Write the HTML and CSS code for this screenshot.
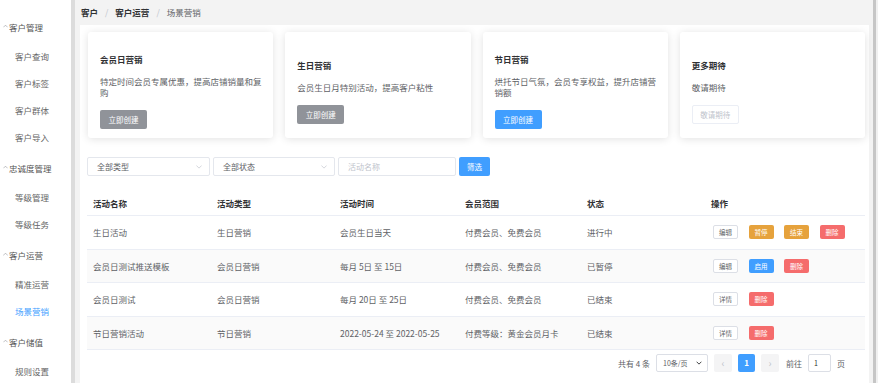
FILE: index.html
```html
<!DOCTYPE html>
<html lang="zh-CN">
  <head>
    <meta charset="UTF-8" />
    <meta name="viewport" content="width=device-width, initial-scale=1.0" />
    <title>场景营销</title>
    <link rel="stylesheet" href="styles.css">
  </head>
  <body>
    <div class="layout">
      <aside class="sidebar">
        <div class="group"><svg class="caret" viewBox="0 0 6 4"><polyline points="0.5,3.5 3,1 5.5,3.5" /></svg>客户管理</div>
        <div class="item">客户查询</div>
        <div class="item">客户标签</div>
        <div class="item">客户群体</div>
        <div class="item">客户导入</div>
        <div class="group"><svg class="caret" viewBox="0 0 6 4"><polyline points="0.5,3.5 3,1 5.5,3.5" /></svg>忠诚度管理</div>
        <div class="item">等级管理</div>
        <div class="item">等级任务</div>
        <div class="group"><svg class="caret" viewBox="0 0 6 4"><polyline points="0.5,3.5 3,1 5.5,3.5" /></svg>客户运营</div>
        <div class="item">精准运营</div>
        <div class="item active">场景营销</div>
        <div class="group"><svg class="caret" viewBox="0 0 6 4"><polyline points="0.5,3.5 3,1 5.5,3.5" /></svg>客户储值</div>
        <div class="item">规则设置</div>
      </aside>

      <main class="main">
        <div class="breadcrumb">
          <b>客户</b><span class="sep">/</span><b>客户运营</b><span class="sep">/</span><span class="current">场景营销</span>
        </div>

        <div class="panel">
          <div class="cards">
            <div class="card">
              <div class="card-title">会员日营销</div>
              <div class="card-desc">特定时间会员专属优惠，提高店铺销量和复购</div>
              <div><button class="btn btn-gray">立即创建</button></div>
            </div>
            <div class="card">
              <div class="card-title">生日营销</div>
              <div class="card-desc">会员生日月特别活动，提高客户粘性</div>
              <div><button class="btn btn-gray">立即创建</button></div>
            </div>
            <div class="card">
              <div class="card-title">节日营销</div>
              <div class="card-desc">烘托节日气氛，会员专享权益，提升店铺营销额</div>
              <div><button class="btn btn-blue">立即创建</button></div>
            </div>
            <div class="card">
              <div class="card-title">更多期待</div>
              <div class="card-desc">敬请期待</div>
              <div><button class="btn btn-disabled">敬请期待</button></div>
            </div>
          </div>

          <div class="filters">
            <div class="select type-select">全部类型<svg class="arrow" viewBox="0 0 8 5"><polyline points="0.5,0.5 4,4 7.5,0.5" /></svg></div>
            <div class="select state-select">全部状态<svg class="arrow" viewBox="0 0 8 5"><polyline points="0.5,0.5 4,4 7.5,0.5" /></svg></div>
            <div class="select name-input placeholder">活动名称</div>
            <button class="btn btn-blue filter-btn">筛选</button>
          </div>

          <div class="table">
            <div class="row head">
              <div>活动名称</div><div>活动类型</div><div>活动时间</div><div>会员范围</div><div>状态</div><div>操作</div>
            </div>
            <div class="row">
              <div>生日活动</div><div>生日营销</div><div>会员生日当天</div><div>付费会员、免费会员</div><div>进行中</div>
              <div class="ops"><span class="tag tag-plain">编辑</span><span class="tag tag-orange">暂停</span><span class="tag tag-orange">结束</span><span class="tag tag-red">删除</span></div>
            </div>
            <div class="row striped">
              <div>会员日测试推送模板</div><div>会员日营销</div><div>每月 5日 至 15日</div><div>付费会员、免费会员</div><div>已暂停</div>
              <div class="ops"><span class="tag tag-plain">编辑</span><span class="tag tag-blue">启用</span><span class="tag tag-red">删除</span></div>
            </div>
            <div class="row">
              <div>会员日测试</div><div>会员日营销</div><div>每月 20日 至 25日</div><div>付费会员、免费会员</div><div>已结束</div>
              <div class="ops"><span class="tag tag-plain">详情</span><span class="tag tag-red">删除</span></div>
            </div>
            <div class="row striped">
              <div>节日营销活动</div><div>节日营销</div><div>2022-05-24 至 2022-05-25</div><div>付费等级：黄金会员月卡</div><div>已结束</div>
              <div class="ops"><span class="tag tag-plain">详情</span><span class="tag tag-red">删除</span></div>
            </div>
          </div>

          <div class="pager">
            <span>共有 4 条</span>
            <div class="page-size">10条/页<svg class="size-arrow" viewBox="0 0 8 5"><polyline points="0.8,0.8 4,4 7.2,0.8" /></svg></div>
            <span class="page-btn nav">&lsaquo;</span>
            <span class="page-btn current-page">1</span>
            <span class="page-btn nav">&rsaquo;</span>
            <span class="goto">前往</span>
            <div class="page-input">1</div>
            <span>页</span>
          </div>
        </div>
      </main>
      <div class="rail"></div>
    </div>
  </body>
</html>
```

FILE: styles.css
```css
* {
  box-sizing: border-box;
}
body {
  margin: 0;
  font-family: "Noto Sans CJK SC", "Noto Sans", sans-serif;
  font-size: 8.5px;
  color: #606266;
  background: #fff;
}
.layout {
  display: flex;
  width: 878px;
  height: 383px;
  overflow: hidden;
}

/* sidebar */
.sidebar {
  width: 75px;
  flex-shrink: 0;
  padding-top: 10px;
  border-right: 4px solid #dcdcdc;
  background: #fff;
}
.group {
  height: 33px;
  display: flex;
  align-items: center;
  padding-left: 3px;
  color: #555;
}
.caret {
  width: 5px;
  height: 4px;
  margin-right: 1px;
  margin-top: -2px;
  fill: none;
  stroke: #909399;
  stroke-width: 0.7;
}
.item {
  height: 27px;
  line-height: 27px;
  padding-left: 15px;
  color: #666;
}
.item.active {
  color: #409eff;
}

/* main */
.main {
  flex: 1;
  background: #f3f3f3;
  padding: 0 4px 0 5px;
}
.rail {
  width: 5px;
  flex-shrink: 0;
  background: #f0f0f0;
  border-left: 3px solid #c6c6c6;
}
.breadcrumb {
  height: 25px;
  line-height: 25px;
  padding-left: 1px;
  color: #303133;
}
.breadcrumb .sep {
  color: #c0c4cc;
  margin: 0 7px;
}
.breadcrumb .current {
  color: #606266;
}
.panel {
  background: #fff;
  height: 358px;
  padding: 7px 4px 0 7px;
}

/* cards */
.cards {
  display: grid;
  grid-template-columns: repeat(4, 1fr);
  gap: 12px;
  margin-left: 1px;
}
.card {
  height: 106px;
  border-radius: 3px;
  box-shadow: 0 1px 8px rgba(0, 0, 0, 0.12);
  padding: 18px 6px 6px 12px;
  display: flex;
  flex-direction: column;
  justify-content: center;
}
.card-title {
  font-weight: bold;
  color: #303133;
  line-height: 12px;
  margin-bottom: 11px;
}
.card-desc {
  line-height: 11px;
  margin-bottom: 12px;
}
.btn {
  font-family: inherit;
  font-size: 7.5px;
  height: 19px;
  width: 47px;
  border: 1px solid transparent;
  border-radius: 2px;
  color: #fff;
  padding: 0;
}
.btn-gray {
  background: #909399;
}
.btn-blue {
  background: #409eff;
}
.btn-disabled {
  background: #fff;
  border-color: #ebeef5;
  color: #c0c4cc;
}

/* filters */
.filters {
  display: flex;
  gap: 3px;
  margin-top: 19px;
}
.select {
  height: 19px;
  border: 1px solid #e4e7ed;
  border-radius: 2px;
  display: flex;
  align-items: center;
  justify-content: space-between;
  padding: 0 7px 0 9px;
  font-size: 8px;
}
.type-select {
  width: 123px;
}
.state-select {
  width: 122px;
}
.name-input {
  width: 118px;
}
.placeholder {
  color: #c0c4cc;
}
.arrow {
  width: 6px;
  height: 4px;
  fill: none;
  stroke: #c0c4cc;
  stroke-width: 0.9;
}
.filter-btn {
  width: 31px;
  font-size: 7.5px;
}

/* table */
.table {
  margin-top: 14px;
}
.row {
  display: grid;
  grid-template-columns: 124px 123px 125px 122px 124px 1fr;
  height: 33.5px;
  align-items: center;
  border-bottom: 1px solid #ebeef5;
}
.row > div {
  padding-left: 6px;
}
.row.head {
  height: 26px;
  font-weight: bold;
  color: #303133;
}
.row.striped {
  background: #fafafa;
}
.ops {
  display: flex;
  gap: 10.5px;
  padding-left: 8px !important;
}
.tag {
  width: 25px;
  height: 14px;
  line-height: 12px;
  text-align: center;
  font-size: 6.5px;
  border-radius: 2px;
  border: 1px solid transparent;
  color: #fff;
}
.tag-plain {
  background: #fff;
  border-color: #dcdfe6;
  color: #606266;
}
.tag-orange {
  background: #e6a23c;
}
.tag-red {
  background: #f56c6c;
}
.tag-blue {
  background: #409eff;
}

/* pagination */
.pager {
  display: flex;
  justify-content: flex-end;
  align-items: center;
  gap: 6px;
  margin-top: 4px;
  padding-right: 20px;
  color: #606266;
  font-size: 8px;
}
.page-size {
  width: 52px;
  height: 18px;
  border: 1px solid #dcdfe6;
  border-radius: 2px;
  display: flex;
  align-items: center;
  justify-content: space-between;
  padding: 0 5px 0 6px;
  font-size: 7px;
}
.size-arrow {
  width: 6px;
  height: 4px;
  fill: none;
  stroke: #303133;
  stroke-width: 1.2;
}
.page-btn {
  width: 18px;
  height: 18px;
  line-height: 18px;
  text-align: center;
  border-radius: 2px;
  background: #f4f4f5;
}
.nav {
  color: #c0c4cc;
  font-size: 10px;
}
.current-page {
  width: 17px;
  background: #409eff;
  color: #fff;
  font-weight: bold;
}
.goto {
  margin-left: 1px;
}
.page-input {
  width: 23px;
  height: 18px;
  line-height: 16px;
  border: 1px solid #dcdfe6;
  border-radius: 2px;
  padding-left: 5px;
  font-size: 7px;
  color: #303133;
}
```
